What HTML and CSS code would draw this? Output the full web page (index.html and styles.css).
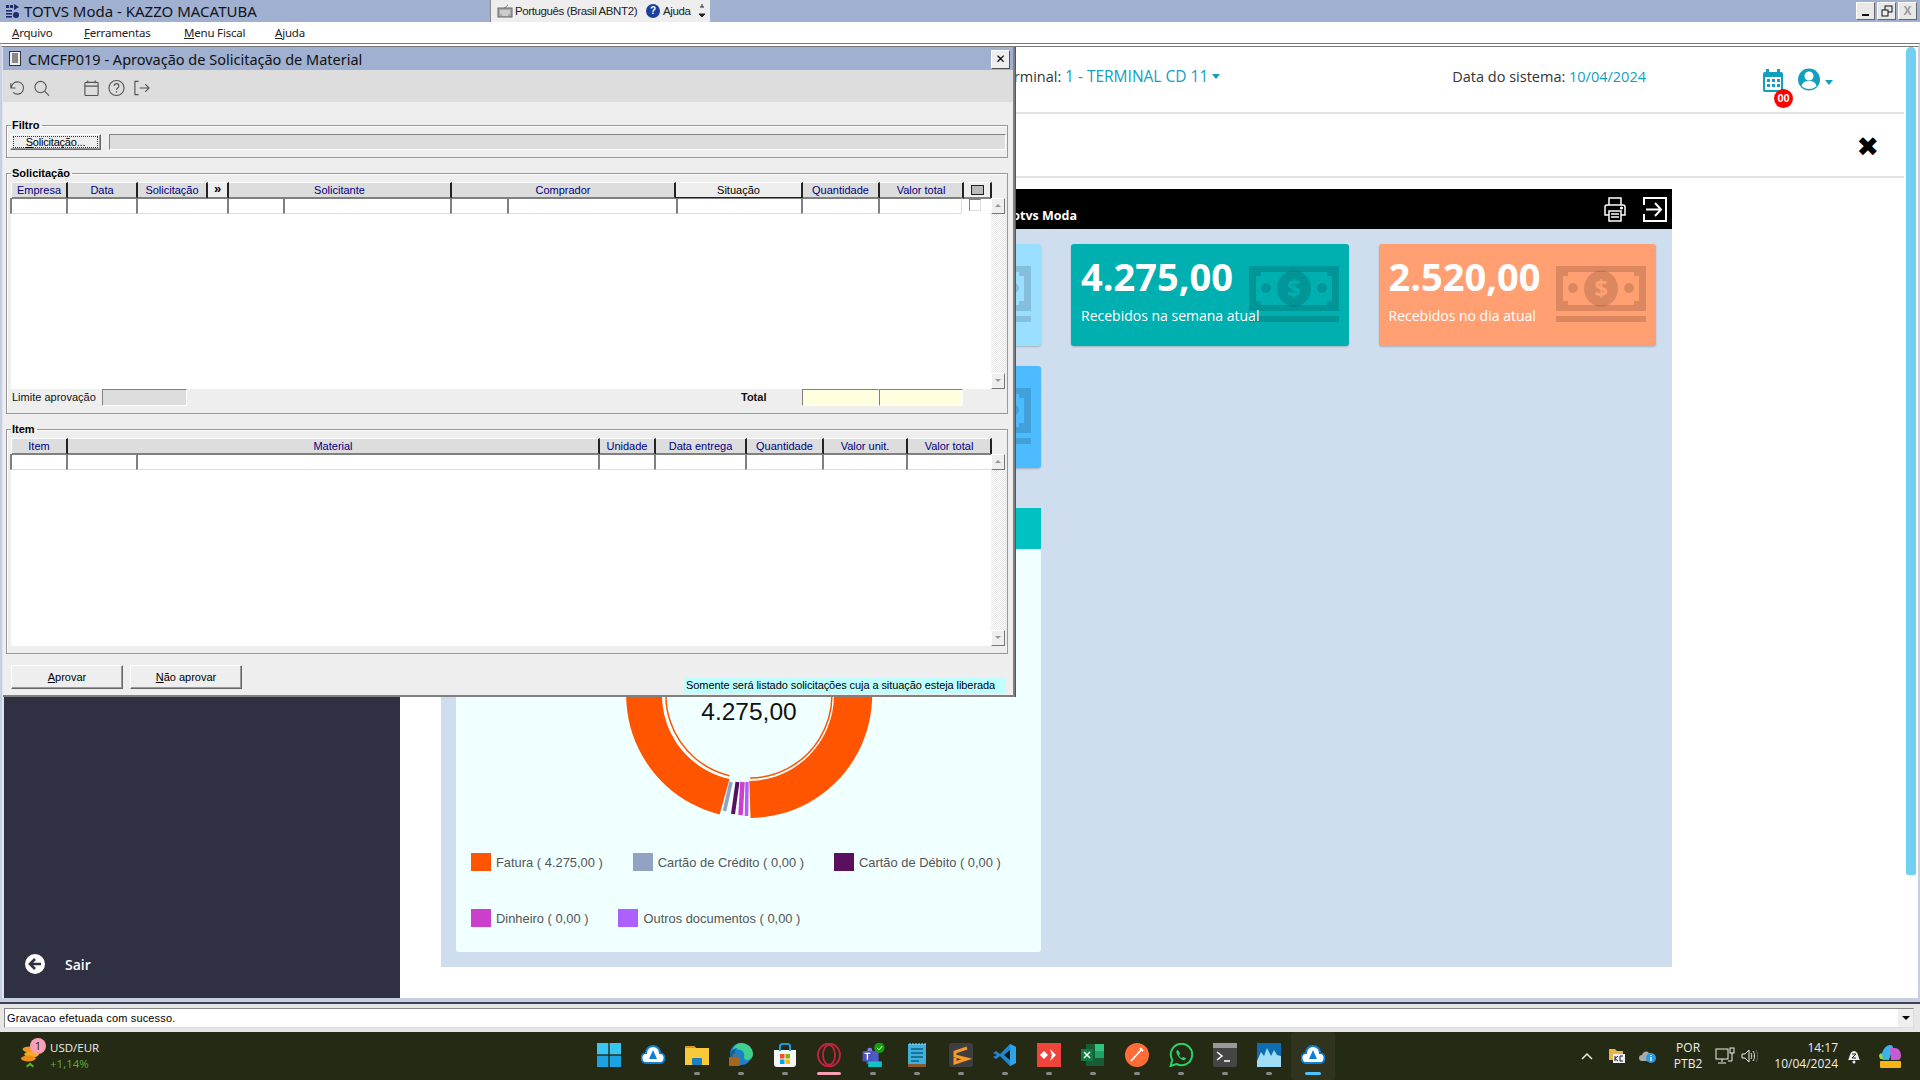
FILE: index.html
```html
<!DOCTYPE html>
<html lang="pt-BR">
<head>
<meta charset="utf-8">
<title>TOTVS Moda - KAZZO MACATUBA</title>
<link rel="stylesheet" href="styles.css">
</head>
<body>
<div class="app">
  <header class="titlebar">
    <svg class="app-icon" viewBox="0 0 14 14"><rect x="0" y="1" width="3" height="3" fill="#1c2a70"/><rect x="4" y="1" width="3" height="3" fill="#1c2a70"/><path d="M8 0l5 3-5 3z" fill="#1c2a70"/><rect x="0" y="6" width="6" height="1.6" fill="#1c2a70"/><rect x="0" y="9" width="6" height="1.6" fill="#1c2a70"/><rect x="0" y="12" width="6" height="1.6" fill="#1c2a70"/><circle cx="10" cy="11" r="3" fill="#1c2a70"/></svg>
    <span class="app-title">TOTVS Moda - KAZZO MACATUBA</span>
    <div class="langbar">
      <svg class="kbd" viewBox="0 0 16 14"><path d="M11 1c-2 0-1 3-4 3" fill="none" stroke="#777"/><rect x="1" y="4" width="14" height="9" fill="#aaa" stroke="#666"/><path d="M3 7h10M3 9h10M5 11h6" stroke="#eee"/></svg>
      <span class="lang-text">Português (Brasil ABNT2)</span>
      <span class="help-dot">?</span>
      <span class="lang-text">Ajuda</span>
      <svg class="lang-arrows" viewBox="0 0 6 14"><path d="M3 0v3M0 10h6l-3 3z" stroke="#222" fill="#222"/><path d="M1 3h4" stroke="#222"/></svg>
    </div>
    <div class="winbtns">
      <span class="winbtn"><i class="min"></i></span>
      <span class="winbtn"><svg viewBox="0 0 12 12"><rect x="4" y="1" width="7" height="6" fill="none" stroke="#111"/><rect x="1" y="5" width="6" height="6" fill="#eee" stroke="#111"/></svg></span>
      <span class="winbtn dim">X</span>
    </div>
  </header>

  <nav class="menubar">
    <span class="menu m1"><u>A</u>rquivo</span>
    <span class="menu m2"><u>F</u>erramentas</span>
    <span class="menu m3"><u>M</u>enu Fiscal</span>
    <span class="menu"><u>A</u>juda</span>
  </nav>

  <div class="frame">
    <aside class="sidebar">
      <div class="sair">
        <svg class="sair-icon" viewBox="0 0 20 20"><circle cx="10" cy="10" r="10" fill="#fff"/><path d="M16 10H6M10 5l-5 5 5 5" fill="none" stroke="#2f3142" stroke-width="2.6"/></svg>
        <span>Sair</span>
      </div>
    </aside>

    <main class="main">
      <div class="topline">
        <span class="term">Terminal: <b>1 - TERMINAL CD 11</b><i class="caret"></i></span>
        <span class="sysdate">Data do sistema: <b>10/04/2024</b></span>
        <span class="cal">
          <svg viewBox="0 0 22 24"><rect x="1" y="3" width="20" height="20" rx="2" fill="#119ec1"/><rect x="4" y="0" width="3" height="5" fill="#119ec1"/><rect x="15" y="0" width="3" height="5" fill="#119ec1"/><rect x="3" y="8" width="16" height="13" fill="#fff"/><g fill="#119ec1"><rect x="5" y="10" width="3" height="3"/><rect x="10" y="10" width="3" height="3"/><rect x="15" y="10" width="3" height="3"/><rect x="5" y="15" width="3" height="3"/><rect x="10" y="15" width="3" height="3"/><rect x="15" y="15" width="3" height="3"/></g></svg>
          <span class="badge">00</span>
        </span>
        <svg class="user" viewBox="0 0 22 23"><circle cx="11" cy="11.5" r="11" fill="#119ec1"/><circle cx="11" cy="8" r="4.5" fill="#fff"/><path d="M3.5 18c1-4 4-5 7.500-5s6.500 1 7.500 5c-2 2-4.500 3-7.500 3s-5.500-1-7.500-3z" fill="#fff"/></svg>
        <i class="caret user-caret"></i>
      </div>
      <div class="closeline"><span class="bigx">✖</span></div>
      <section class="dash">
        <div class="blackbar">
          <span class="bar-title">Totvs Moda</span>
          <div class="bar-icons">
            <svg viewBox="0 0 24 25" fill="none" stroke="#fff" stroke-width="1.5"><path d="M6 8V1h12v7"/><path d="M6 18H2V10c0-1 1-2 2-2h16c1 0 2 1 2 2v8h-4"/><rect x="6" y="14" width="12" height="10"/><path d="M8 17h8M8 20h8"/><circle cx="18.500" cy="11" r=".8" fill="#fff"/></svg>
            <svg viewBox="0 0 24 25" fill="none" stroke="#fff" stroke-width="2"><path d="M1 8V1h22v23H1v-7"/><path d="M3 12.500h14M12 6l6 6.500-6 6.500"/></svg>
          </div>
        </div>
        <div class="dash-grid">
          <div class="card blue1"></div>
          <div class="card blue1">
            <svg class="money" viewBox="0 0 90 56"><use href="#bill"/></svg>
          </div>
          <div class="card teal">
            <svg class="money" viewBox="0 0 90 56"><use href="#bill"/></svg>
            <div class="amount">4.275,00</div>
            <div class="sub">Recebidos na semana atual</div>
          </div>
          <div class="card orange">
            <svg class="money" viewBox="0 0 90 56"><use href="#bill"/></svg>
            <div class="amount">2.520,00</div>
            <div class="sub">Recebidos no dia atual</div>
          </div>
          <div class="card blue2"></div>
          <div class="card blue2">
            <svg class="money" viewBox="0 0 90 56"><use href="#bill"/></svg>
          </div>
          <div class="chart">
            <div class="chart-head"></div>
            <div class="chart-body">
              <svg class="donut" viewBox="0 0 260 260">
                <path d="M131.500 253A123 123 0 1 0 100.600 249.400L110.500 214A86 86 0 1 1 130.300 216Z" fill="#ff5500"/>
                <path d="M131 213A83 83 0 1 0 110.500 210.700" fill="none" stroke="#ff5500" stroke-width="1.500"/>
                <path d="M105.500 246L112 217" stroke="#92a2c2" stroke-width="3.500"/>
                <path d="M114 249L118.500 217" stroke="#5a0f5f" stroke-width="4"/>
                <path d="M121.500 250L123.500 217" stroke="#cc3fcc" stroke-width="4.500"/>
                <path d="M127.500 251L128 217" stroke="#ad5fff" stroke-width="3.500"/>
                <text x="130" y="155" class="donut-text">4.275,00</text>
              </svg>
              <div class="legend">
                <span class="leg"><i class="sw c1"></i>Fatura ( 4.275,00 )</span>
                <span class="leg"><i class="sw c2"></i>Cartão de Crédito ( 0,00 )</span>
                <span class="leg"><i class="sw c3"></i>Cartão de Débito ( 0,00 )</span>
                <span class="leg"><i class="sw c4"></i>Dinheiro ( 0,00 )</span>
                <span class="leg"><i class="sw c5"></i>Outros documentos ( 0,00 )</span>
              </div>
            </div>
          </div>
        </div>
      </section>
    </main>
    <div class="vscroll"><div class="thumb"></div></div>
  </div>

  <footer class="statusbar">
    <div class="status-field">Gravacao efetuada com sucesso.<span class="status-drop"><i></i></span></div>
  </footer>

  <div class="taskbar">
    <div class="tb-left">
      <svg class="coins" viewBox="0 0 24 30"><ellipse cx="12" cy="7" rx="9" ry="3.500" fill="#f09a20"/><ellipse cx="14" cy="13" rx="9" ry="3.500" fill="#f5a829"/><ellipse cx="10" cy="18" rx="9" ry="3.500" fill="#e88f18"/><path d="M8 28l4-3.500 4 3.500" fill="none" stroke="#5cb030" stroke-width="2.500"/></svg>
      <span class="notif">1</span>
      <div class="ticker"><span>USD/EUR</span><span class="up">+1,14%</span></div>
    </div>
    <div class="tb-center">
      <span class="tb"><svg viewBox="0 0 24 24"><g fill="#39c6f2"><rect width="11.300" height="11.300"/><rect x="12.700" width="11.300" height="11.300"/></g><g fill="#1aa3e0"><rect y="12.700" width="11.300" height="11.300"/><rect x="12.700" y="12.700" width="11.300" height="11.300"/></g></svg></span>
      <span class="tb"><svg viewBox="0 0 24 24"><use href="#cloud"/></svg></span>
      <span class="tb dot"><svg viewBox="0 0 24 24"><path d="M0 3h9l2 2h13v17H0z" fill="#f9c93c"/><path d="M0 3h9l2 2H0z" fill="#d89a18"/><rect x="7" y="15" width="10" height="7" rx="1" fill="#1b7fc4"/></svg></span>
      <span class="tb dot"><svg viewBox="0 0 24 24"><circle cx="12" cy="11" r="11" fill="#1b82c9"/><path d="M12 0c7 0 12 5 12 11 0 4-3 6-6 6-2 0-3-1-3-3 2-6-5-10-12-6 2-5 5-8 9-8z" fill="#3fcf8e"/><path d="M1 13c0-5 4-8 8-8-3 2-5 6-3 10z" fill="#125ea8"/><rect x="0" y="14" width="11" height="9" rx="1" fill="#a8651e"/><rect x="4" y="12" width="3" height="3" fill="none" stroke="#a8651e"/></svg></span>
      <span class="tb dot"><svg viewBox="0 0 24 24"><path d="M1 7h22v14c0 2-1 3-3 3H4c-2 0-3-1-3-3z" fill="#f5f5f5"/><path d="M7 8V3c0-3 10-3 10 0v5" fill="none" stroke="#1aa3e0" stroke-width="2"/><rect x="7" y="11" width="4.500" height="4.500" fill="#f25022"/><rect x="12.500" y="11" width="4.500" height="4.500" fill="#7fba00"/><rect x="7" y="16.500" width="4.500" height="4.500" fill="#00a4ef"/><rect x="12.500" y="16.500" width="4.500" height="4.500" fill="#ffb900"/></svg></span>
      <span class="tb pink"><svg viewBox="0 0 24 24" fill="none" stroke="#c4233f" stroke-width="1.800"><ellipse cx="12" cy="12" rx="11" ry="11.500"/><ellipse cx="12" cy="12" rx="6" ry="10"/></svg></span>
      <span class="tb dot"><svg viewBox="0 0 26 30"><circle cx="9" cy="9" r="3" fill="#7b83eb"/><path d="M5 10h15v16H5z" fill="#5059c9"/><rect x="0" y="10" width="12" height="13" fill="#4b53bc"/><path d="M2.500 13h7M6 13v8" stroke="#fff" stroke-width="1.800"/><circle cx="21" cy="6" r="6.500" fill="#13a10e"/><path d="M18 6l2.500 2.500 4-4.500" fill="none" stroke="#fff" stroke-width="1.200"/><rect x="7" y="23" width="17" height="7" fill="#0fc5c5"/></svg></span>
      <span class="tb dot"><svg viewBox="0 0 20 24"><rect x="1" y="1" width="18" height="20" fill="#3fb0dc"/><rect x="1" y="21" width="18" height="3" fill="#8a5a2b"/><path d="M4 6h12M4 10h12M4 14h12M4 18h8" stroke="#0e5f85" stroke-width="1.500"/><path d="M3 0v2M6 0v2M9 0v2M12 0v2M15 0v2M18 0v2" stroke="#b7e3f5"/></svg></span>
      <span class="tb dot"><svg viewBox="0 0 24 24"><rect width="24" height="24" rx="3" fill="#3e3e40"/><path d="M18 5L6 9v4l12 3-12 4v-5l0 0" fill="none" stroke="#f79a28" stroke-width="3"/></svg></span>
      <span class="tb dot"><svg viewBox="0 0 24 24"><path d="M17 1l6 3v16l-6 3L7 13l-4 3-3-2 4-2-4-2 3-2 4 3z" fill="#1f86d0"/><path d="M17 1l6 3v16l-6 3z" fill="#2fa3ea"/><path d="M17 7l-6 5 6 5z" fill="#0d1a10"/></svg></span>
      <span class="tb dot"><svg viewBox="0 0 24 24"><rect width="24" height="24" fill="#ef443b"/><path d="M7 8l4 4-4 4-4-4zM13 6l6 6-6 6 2-6z" fill="#fff"/></svg></span>
      <span class="tb dot"><svg viewBox="0 0 24 24"><rect x="5" y="1" width="18" height="22" fill="#185c37"/><rect x="14" y="1" width="9" height="7" fill="#33c481"/><rect x="14" y="8" width="9" height="7" fill="#21a366"/><rect x="0" y="6" width="12" height="12" fill="#107c41"/><path d="M3 9l6 6M9 9l-6 6" stroke="#fff" stroke-width="1.500"/></svg></span>
      <span class="tb dot"><svg viewBox="0 0 24 24"><circle cx="12" cy="12" r="12" fill="#ff6c37"/><path d="M6 18L17 6M15 5l3 3" stroke="#fff" stroke-width="1.800" fill="none"/></svg></span>
      <span class="tb dot"><svg viewBox="0 0 24 24"><path d="M1.500 23l1.800-6A10.700 10.700 0 1 1 7.500 21z" fill="none" stroke="#25d366" stroke-width="2"/><path d="M8 7c-1 1-1 3 1 6s5 5 7 4l1-2-3-1-1 1c-1 0-3-2-3-3l1-1-1-3z" fill="#25d366"/></svg></span>
      <span class="tb dot"><svg viewBox="0 0 24 24"><rect width="24" height="24" rx="2" fill="#454545"/><rect width="24" height="5" fill="#999"/><path d="M4 9l5 4-5 4" fill="none" stroke="#fff" stroke-width="1.500"/><path d="M11 18h6" stroke="#fff" stroke-width="1.500"/></svg></span>
      <span class="tb dot"><svg viewBox="0 0 24 24"><rect width="24" height="24" fill="#0e6cb0"/><path d="M0 18l4-9 3 4 3-8 4 8 3-6 3 5 4 1v11H0z" fill="#9fdcf5"/></svg></span>
      <span class="tb active"><svg viewBox="0 0 24 24"><use href="#cloud"/></svg></span>
    </div>
    <div class="tb-right">
      <svg class="tr chev" viewBox="0 0 12 8"><path d="M1 7l5-5 5 5" fill="none" stroke="#eee" stroke-width="1.500"/></svg>
      <svg class="tr kb" viewBox="0 0 16 16"><path d="M0 1h6l2 2h6v9H0z" fill="#e5b44a"/><rect x="4" y="6" width="12" height="9" fill="#eee"/><path d="M6 8v5M9 8l-3 2.500L9 13M11 8v5h3M11 8h3" stroke="#123" fill="none"/></svg>
      <svg class="tr cld" viewBox="0 0 18 14"><path d="M3 12a3 3 0 0 1 0-6 4 4 0 0 1 7-2 4 4 0 0 1 4 4v4z" fill="#aaa"/><circle cx="12" cy="9" r="5" fill="#2b9ae0"/><path d="M12 8v4M12 6v1" stroke="#fff" stroke-width="1.300"/></svg>
      <div class="ime"><span>POR</span><span>PTB2</span></div>
      <svg class="tr net" viewBox="0 0 20 18" fill="none" stroke="#eee"><rect x="1" y="2" width="12" height="10"/><path d="M7 12v3M3 16h8"/><rect x="15" y="1" width="4" height="5"/><path d="M17 6v8h-4"/></svg>
      <svg class="tr vol" viewBox="0 0 18 14" fill="none" stroke="#eee"><path d="M1 5h3l4-4v12l-4-4H1z"/><path d="M10 4c1 2 1 4 0 6M12 2c2 3 2 7 0 10"/><path d="M15 1c2 4 2 8 0 12" stroke="#666"/></svg>
      <div class="clock"><span>14:17</span><span>10/04/2024</span></div>
      <svg class="tr bell" viewBox="0 0 16 16"><path d="M2 12c2-2 1-8 6-9 5 1 4 7 6 9z" fill="#eee"/><circle cx="8" cy="14" r="1.500" fill="#eee"/><path d="M6 6h4l-4 4h4" stroke="#222" fill="none"/></svg>
      <svg class="tr copilot" viewBox="0 0 24 24"><path d="M3 14C4 6 8 1 12 1c2 0 3 1 3 3l-4 12H5z" fill="#37b5e8"/><path d="M12 4l5 0c4 0 6 4 6 8 0 2-1 4-3 4h-7z" fill="#c65bd4"/><path d="M1 12c0-2 2-4 3-2l1 5H2z" fill="#9ad23c"/><rect x="2" y="17" width="21" height="7" rx="1" fill="#f7b615"/></svg>
    </div>
  </div>

  <section class="dialog">
    <div class="dlg-title">
      <svg class="doc" viewBox="0 0 12 15"><rect x=".5" y=".5" width="11" height="14" fill="#eee" stroke="#333"/><path d="M3 3h6M3 5h6M3 7h6M3 9h6M3 11h6" stroke="#222"/></svg>
      <span class="dlg-name">CMCFP019 - Aprovação de Solicitação de Material</span>
      <span class="dlg-close">✕</span>
    </div>
    <div class="dlg-tools">
      <svg viewBox="0 0 18 18"><path d="M3 4v5h5M3.500 9a6.500 6.500 0 1 1 2 4.700" fill="none"/></svg>
      <svg viewBox="0 0 18 18"><circle cx="8" cy="8" r="6" fill="none"/><path d="M12.500 12.500L17 17"/></svg>
      <svg class="gap" viewBox="0 0 18 18"><rect x="2" y="3" width="14" height="14" rx="1" fill="none"/><path d="M2 7h14M5 1v3M13 1v3"/></svg>
      <svg viewBox="0 0 18 18"><circle cx="9" cy="9" r="8" fill="none"/><path d="M6.500 7c0-3.500 5-3.500 5 0 0 2-2.500 2-2.500 4M9 12.500v1.500" fill="none"/></svg>
      <svg viewBox="0 0 18 18"><path d="M6 2H2v14h4M7 9h10M13 5l4 4-4 4" fill="none"/></svg>
    </div>
    <div class="dlg-body">
      <fieldset class="fs fs-filtro">
        <legend>Filtro</legend>
        <div class="filtro-row">
          <button class="btn btn-sol" type="button"><span class="focus"><u>S</u>olicitação...</span></button>
          <div class="ro-field wide"></div>
        </div>
      </fieldset>
      <fieldset class="fs fs-sol">
        <legend>Solicitação</legend>
        <div class="tbl-wrap tall-sol">
          <div class="tbl">
            <div class="hdr hdr-sol">
              <span>Empresa</span><span>Data</span><span>Solicitação</span><span class="more">»</span><span>Solicitante</span><span>Comprador</span><span class="sel">Situação</span><span>Quantidade</span><span>Valor total</span><span class="chk-h"><i></i></span>
            </div>
            <div class="row row-sol">
              <span></span><span></span><span></span><span></span><span></span><span></span><span></span><span></span><span></span><span></span><span class="chk-c"><i></i></span>
            </div>
          </div>
          <div class="sb"><span class="sb-btn up"></span><span class="sb-track"></span><span class="sb-btn down"></span></div>
        </div>
        <div class="sol-foot">
          <span class="lim">Limite aprovação</span>
          <span class="ro-field"></span>
          <b class="tot">Total</b>
          <span class="sum"></span>
          <span class="sum"></span>
        </div>
      </fieldset>
      <fieldset class="fs fs-item">
        <legend>Item</legend>
        <div class="tbl-wrap tall-item">
          <div class="tbl">
            <div class="hdr hdr-item">
              <span>Item</span><span>Material</span><span>Unidade</span><span>Data entrega</span><span>Quantidade</span><span>Valor unit.</span><span>Valor total</span>
            </div>
            <div class="row row-item">
              <span></span><span></span><span></span><span></span><span></span><span></span><span></span><span></span>
            </div>
          </div>
          <div class="sb"><span class="sb-btn up"></span><span class="sb-track"></span><span class="sb-btn down"></span></div>
        </div>
      </fieldset>
      <div class="dlg-foot">
        <button class="btn act" type="button"><u>A</u>provar</button>
        <button class="btn act" type="button"><u>N</u>ão aprovar</button>
        <span class="hint">Somente será listado solicitações cuja a situação esteja liberada</span>
      </div>
    </div>
  </section>
</div>

<svg class="defs" aria-hidden="true">
  <defs>
    <symbol id="bill" viewBox="0 0 90 56">
      <rect width="90" height="45" class="bill-bg"/>
      <rect y="50" width="90" height="6" class="bill-bg"/>
      <path d="M7 10h5v-4h66v4h5v25h-5v4H12v-4H7z" class="bill-fg"/>
      <ellipse cx="45" cy="22.500" rx="17" ry="18" class="bill-bg"/>
      <circle cx="17" cy="22" r="5" class="bill-bg"/>
      <circle cx="73" cy="22" r="5" class="bill-bg"/>
      <text x="45" y="31" class="bill-cur">$</text>
    </symbol>
    <symbol id="cloud" viewBox="0 0 24 24">
      <path d="M6 20a5 5 0 0 1-1-10 7 7 0 0 1 14 0 5 5 0 0 1-1 10z" fill="#fff" stroke="#0f7fd6" stroke-width="2"/>
      <path d="M12 7l-4 9h8z" fill="#0f7fd6"/>
    </symbol>
  </defs>
</svg>
</body>
</html>
```

FILE: styles.css
```css
* { box-sizing: border-box; }
html, body { margin: 0; height: 100%; overflow: hidden; }
body { font-family: "Liberation Sans", Arial, sans-serif; font-size: 11px; color: #000; background: #f0f0f0; }
.defs { width: 0; height: 0; position: absolute; }
.app { position: relative; width: 1920px; height: 1080px; display: flex; flex-direction: column; }

/* Window title */
.titlebar { height: 22px; background: #a0b0d0; display: flex; align-items: center; flex: none; }
.app-icon { width: 14px; height: 14px; margin-left: 6px; }
.app-title { margin-left: 4px; font: 15px "Noto Sans", sans-serif; color: #10131c; width: 466px; white-space: nowrap; }
.langbar { width: 220px; height: 22px; background: #eee; border-left: 1px solid #888; display: flex; align-items: center; padding-left: 6px; flex: none; }
.kbd { width: 16px; height: 14px; margin-right: 2px; flex: none; }
.lang-text { font-size: 11.500px; letter-spacing: -.4px; color: #222; white-space: nowrap; }
.help-dot { width: 14px; height: 14px; border-radius: 50%; background: #1a3f9c; color: #fff; font: bold 10px/14px "Liberation Sans", sans-serif; text-align: center; margin: 0 3px 0 9px; flex: none; }
.lang-arrows { width: 6px; height: 14px; margin-left: 9px; flex: none; }
.winbtns { margin-left: auto; display: flex; gap: 2px; padding-right: 3px; }
.winbtn { width: 19px; height: 18px; background: #e8e8e8; border: 1px solid; border-color: #fff #666 #666 #fff; display: flex; align-items: center; justify-content: center; font: bold 12px "Liberation Sans", sans-serif; }
.winbtn svg { width: 12px; height: 12px; }
.winbtn.dim { color: #999; }
.min { width: 7px; height: 2px; background: #111; margin-top: 8px; }

/* Menu */
.menubar { height: 21px; background: #fff; display: flex; align-items: center; padding-left: 12px; font: 11.500px "Noto Sans", sans-serif; color: #222; flex: none; }
.menu { letter-spacing: -.2px; }
.m1 { width: 72px; } .m2 { width: 100px; } .m3 { width: 91px; }

/* Frame */
.frame { flex: none; height: 959px; display: flex; border: solid #c7cfe0; border-width: 0 2px 4px 2px; border-top: 4px double #777; background: #fff; box-shadow: inset 2px 0 0 #dfe4ee; }
.sidebar { width: 396px; margin-left: 2px; background: #2f3142; display: flex; flex-direction: column; justify-content: flex-end; flex: none; }
.sair { display: flex; align-items: center; padding: 0 0 24px 21px; color: #fff; font: 600 14px "Open Sans", sans-serif; }
.sair-icon { width: 20px; height: 20px; margin-right: 20px; }
.main { flex: 1; min-width: 0; }
.vscroll { width: 14px; flex: none; padding-left: 2px; }
.thumb { width: 10px; height: 828px; background: #6fd0f2; border-radius: 5px 5px 2px 2px; }

.topline { height: 67px; border-bottom: 2px solid #e3e3e3; display: flex; align-items: center; justify-content: flex-end; padding: 0 71px 7px 0; font: 14.500px "Open Sans", sans-serif; color: #333; }
.topline b { font-weight: 400; color: #119ec1; }
.term b { font-size: 15.500px; }
.caret { display: inline-block; border: 4px solid transparent; border-top: 5px solid #119ec1; border-bottom: 0; margin-left: 4px; vertical-align: 3px; }
.term { margin-right: 232px; }
.sysdate { margin-right: 116px; }
.cal { position: relative; width: 22px; height: 24px; margin: 9px 14px 0 0; }
.cal svg { width: 22px; height: 24px; display: block; }
.badge { position: absolute; left: 12px; top: 20px; width: 19px; height: 19px; border-radius: 50%; background: #f00; color: #fff; font: bold 11px/19px "Liberation Sans", sans-serif; text-align: center; }
.user { width: 22px; height: 23px; margin-top: 7px; }
.user-caret { margin-left: 5px; margin-top: 13px; }
.closeline { height: 64px; border-bottom: 2px solid #e3e3e3; display: flex; align-items: center; justify-content: flex-end; padding: 2px 25px 0 0; }
.bigx { font: bold 27px "DejaVu Sans", sans-serif; color: #000; }

/* Dashboard */
.dash { margin: 11px 0 0 41px; width: 1231px; background: #cfdeee; height: 778px; }
.blackbar { height: 40px; background: #000; display: flex; justify-content: space-between; align-items: flex-end; padding: 0 5px 5px 564px; }
.bar-title { color: #fff; font: 700 12.500px "Open Sans", sans-serif; }
.bar-icons { display: flex; gap: 16px; align-self: center; margin-top: 5px; }
.bar-icons svg { width: 24px; height: 25px; display: block; }
.dash-grid { display: grid; grid-template-columns: repeat(4, 277.500px); column-gap: 30px; grid-template-rows: 102px 102px 444px; row-gap: 20px; padding: 15px 15px 0 15px; }
.dash-grid .chart { grid-column: 1 / span 2; margin-top: 20px; }
.card { position: relative; border-radius: 3px; box-shadow: 0 1px 2px rgba(0,0,0,.2); padding: 10px; color: #fff; }
.card.teal { grid-row: 1; grid-column: 3; background: #00afb0; }
.card.orange { grid-row: 1; grid-column: 4; background: #ff9f72; }
.blue1 { background: #9bdfff; }
.blue2 { background: #4dbbff; }
.money { position: absolute; right: 10px; top: 22px; width: 90px; height: 56px; color: #000; }
.blue1 .money { --fg: #9bdfff; }
.blue2 .money { --fg: #4dbbff; }
.teal .money { --fg: #00afb0; }
.orange .money { --fg: #ff9f72; }
.bill-bg { fill: rgba(0,0,0,.14); }
.bill-fg { fill: var(--fg); }
.bill-cur { fill: var(--fg); font: bold 24px "Open Sans", sans-serif; text-anchor: middle; }
.amount { position: relative; font: 700 38px/44px "Open Sans", sans-serif; margin-top: 0; }
.sub { position: relative; font: 14px/20px "Open Sans", sans-serif; margin-top: 8px; }
.chart { background: #f0ffff; border-radius: 0 0 3px 3px; display: flex; flex-direction: column; height: 444px; }
.chart-head { height: 41px; background: #00c2c2; flex: none; }
.chart-body { padding: 16px 15px 0; }
.donut { display: block; width: 260px; height: 260px; margin: 0 auto; }
.donut-text { font: 24.500px "Liberation Sans", sans-serif; fill: #111; text-anchor: middle; }
.legend { display: flex; flex-wrap: wrap; column-gap: 30px; row-gap: 38px; margin-top: 28px; }
.leg { display: flex; align-items: center; height: 18px; font-size: 12.900px; color: #555; }
.sw { width: 20px; height: 18px; margin-right: 5px; }
.c1 { background: #ff5500; } .c2 { background: #92a2c2; } .c3 { background: #5a0f5f; } .c4 { background: #cc3fcc; } .c5 { background: #ad5fff; }

/* Status */
.statusbar { height: 30px; flex: none; background: #e6e6e6; border-top: 2px solid #3b4457; padding: 4px 6px 4px 4px; }
.status-field { height: 20px; background: #fff; border: 1px solid; border-color: #888 #ddd #ddd #888; padding-left: 2px; font-size: 11px; line-height: 18px; position: relative; letter-spacing: .15px; }
.status-drop { position: absolute; right: 0; top: 0; width: 16px; height: 18px; background: #eee; border-left: 1px solid #fff; display: flex; align-items: center; justify-content: center; }
.status-drop i { border: 4px solid transparent; border-top: 4px solid #000; border-bottom: 0; }

/* Taskbar */
.taskbar { flex: 1; background: #252a14; display: grid; grid-template-columns: 1fr auto 1fr; color: #eee; }
.tb-left { position: relative; display: flex; align-items: center; padding-left: 20px; }
.coins { width: 20px; height: 28px; }
.notif { position: absolute; left: 30px; top: 6px; width: 16px; height: 16px; border-radius: 50%; background: #fb9fb4; color: #222; font: 11px/16px "Open Sans", sans-serif; text-align: center; }
.ticker { display: flex; flex-direction: column; margin-left: 10px; font: 11.500px/16px "Open Sans", sans-serif; }
.up { color: #5cb030; }
.tb-center { display: flex; padding-left: 2px; }
.tb { position: relative; width: 44px; height: 48px; display: flex; align-items: center; justify-content: center; padding-bottom: 2px; }
.tb svg { width: 24px; height: 24px; }
.tb.dot::after, .tb.pink::after, .tb.active::after { content: ""; position: absolute; bottom: 5px; left: 50%; height: 3px; border-radius: 2px; }
.tb.dot::after { width: 6px; margin-left: -3px; background: #888; }
.tb.pink::after { width: 24px; margin-left: -12px; background: #fb9fb4; }
.tb.active { background: rgba(255,255,255,.05); border-radius: 4px; }
.tb.active::after { width: 16px; margin-left: -8px; background: #4cc2ff; }
.tb-right { display: flex; align-items: center; justify-content: flex-end; padding-right: 18px; }
.tr { flex: none; }
.chev { width: 12px; height: 8px; margin-right: 16px; }
.kb { width: 16px; height: 16px; margin-right: 14px; }
.cld { width: 18px; height: 14px; margin-right: 17px; }
.ime { display: flex; flex-direction: column; align-items: center; font: 12px/16px "Open Sans", sans-serif; margin-right: 13px; }
.net { width: 20px; height: 18px; margin-right: 6px; }
.vol { width: 18px; height: 14px; margin-right: 15px; }
.clock { display: flex; flex-direction: column; align-items: flex-end; font: 12px/16px "Open Sans", sans-serif; margin-right: 8px; }
.bell { width: 16px; height: 16px; margin-right: 16px; }
.copilot { width: 24px; height: 24px; }

/* Dialog */
.dialog { position: absolute; left: 3px; top: 47px; width: 1012px; height: 650px; background: #eee; border: solid #808080; border-width: 0 2px 2px 0; display: flex; flex-direction: column; box-shadow: 1px 0 0 #555; }
.dlg-title { height: 23px; background: #a0b0d0; display: flex; align-items: center; padding: 0 3px 0 6px; flex: none; }
.doc { width: 12px; height: 15px; }
.dlg-name { margin-left: 7px; font: 14.500px "Noto Sans", sans-serif; color: #111; white-space: nowrap; }
.dlg-close { margin-left: auto; margin-top: 2px; width: 19px; height: 19px; background: #eee; border: 1px solid; border-color: #fff #555 #555 #fff; text-align: center; font: bold 12px/17px "DejaVu Sans", sans-serif; }
.dlg-tools { height: 32px; background: #ddd; display: flex; align-items: center; padding: 4px 0 0 5px; gap: 8px; flex: none; }
.dlg-tools svg { width: 17px; height: 18px; stroke: #555; stroke-width: 1.200; }
.dlg-tools .gap { margin-left: 25px; }
.dlg-body { flex: 1; padding: 17px 5px 0 3px; display: flex; flex-direction: column; }
.fs { margin: 0; border: solid #999; border-width: 1px; padding: 2px 1px 7px 4px; min-width: 0; box-shadow: inset 1px 1px 0 #fff; }
.fs legend { font: bold 11px/13px "Liberation Sans", sans-serif; padding: 0 2px 0 1px; margin-left: 0; }
.fs-sol { margin-top: 9px; }
.fs-item { margin-top: 9px; }
.filtro-row { display: flex; gap: 8px; height: 16px; margin-left: -1px; }
.btn { background: #eee; border: 1px solid; border-color: #fff #666 #666 #fff; box-shadow: inset 0 -1px 0 #999, inset -1px 0 0 #999; font: 11px "Liberation Sans", sans-serif; color: #000; padding: 0; }
.btn-sol { width: 91px; height: 16px; }
.focus { display: block; margin: 1px 2px; border: 1px dotted #333; line-height: 10px; height: 12px; letter-spacing: -.2px; }
.ro-field { background: #ddd; border: 1px solid; border-color: #808080 #fff #fff #808080; display: block; height: 17px; }
.ro-field.wide { flex: 1; height: 16px; }
.tbl-wrap { display: flex; }
.tall-sol { height: 207px; }
.tall-item { height: 208px; }
.tbl { width: 980px; background: #fff; flex: none; }
.hdr, .row { display: grid; }
.hdr { height: 16px; background: #eee; margin-left: 1px; }
.hdr span { background: #ddd; color: #000080; text-align: center; line-height: 14px; border-top: 1px solid #fff; border-right: 2px solid #222; border-bottom: 2px solid #808080; }
.hdr span.sel { background: #eee; color: #000; border-bottom-color: #222; }
.hdr span.more { background: #eee; color: #000; font-weight: bold; font-size: 13px; line-height: 11px; }
.chk-h { background: #eee !important; display: flex; align-items: center; justify-content: center; }
.chk-h i { width: 13px; height: 10px; background: #bbb; border: 1px solid #222; }
.hdr-sol { grid-template-columns: 56px 70px 70px 21px 223px 224px 127px 77px 84px 28px; }
.row-sol { grid-template-columns: 56px 70px 91px 56px 167px 57px 169px 125px 77px 84px 28px; }
.hdr-item { grid-template-columns: 56px 532px 56px 91px 77px 84px 84px; }
.row-item { grid-template-columns: 56px 70px 462px 56px 91px 77px 84px 84px; }
.row { height: 16px; margin-left: -1px; }
.row span { border-left: 2px solid #808080; border-top: 1px solid #808080; border-bottom: 1px solid #ddd; }
.row span:nth-last-child(2) { border-right: 1px solid #ddd; }
.row-sol span:last-child { border: 0; }
.row-item span:nth-last-child(2) { border-right: 0; }
.row-sol .chk-c { display: flex; padding: 1px 0 0 7px; }
.chk-c i { width: 12px; height: 12px; background: #fff; border: 1px solid; border-color: #808080 #ddd #ddd #808080; }
.sb { width: 14px; flex: none; padding-top: 16px; display: flex; flex-direction: column; }
.sb-btn { height: 16px; background: #eee; border: 1px solid; border-color: #fff #777 #777 #fff; position: relative; flex: none; }
.sb-btn::after { content: ""; position: absolute; left: 3px; top: 5px; border: 3px solid transparent; }
.sb-btn.up::after { border-bottom: 3px solid #999; border-top: 0; }
.sb-btn.down::after { border-top: 3px solid #999; border-bottom: 0; }
.sb-track { flex: 1; background: repeating-conic-gradient(#e6e6e6 0 25%, #fff 0 50%) 0 0 / 2px 2px; }
.sol-foot { display: grid; grid-template-columns: 90px 85px 554px 61px 77px 84px; align-items: center; height: 17px; padding-left: 1px; color: #111; margin-right: 13px; }
.lim, .tot { margin-top: -2px; }
.tot { grid-column: 4; }
.sum { background: #ffffdf; border: 1px solid; border-color: #808080 #fff #fff #808080; height: 17px; }
.dlg-foot { flex: 1; display: flex; gap: 7px; align-items: flex-end; padding: 0 0 0 5px; position: relative; }
.btn.act { width: 112px; height: 24px; margin-bottom: 6px; }
.hint { margin-left: auto; margin-right: 2px; width: 322px; height: 17px; line-height: 16px; background: #bfffff; padding-left: 2px; margin-bottom: 1px; letter-spacing: -.08px; white-space: nowrap; }
```
